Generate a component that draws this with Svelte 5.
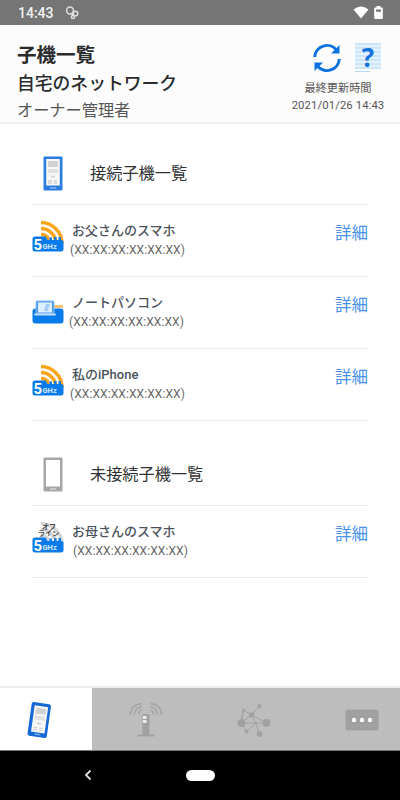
<script lang="ts">
  interface Device {
    name: string;
    mac: string;
    kind: "wifi" | "laptop" | "offline";
    shift: number;
  }

  const connected: Device[] = [
    { name: "お父さんのスマホ", mac: "(XX:XX:XX:XX:XX:XX)", kind: "wifi", shift: -2 },
    { name: "ノートパソコン", mac: "(XX:XX:XX:XX:XX:XX)", kind: "laptop", shift: -3 },
    { name: "私のiPhone", mac: "(XX:XX:XX:XX:XX:XX)", kind: "wifi", shift: -2 },
  ];

  const disconnected: Device[] = [
    { name: "お母さんのスマホ", mac: "(XX:XX:XX:XX:XX:XX)", kind: "offline", shift: 1 },
  ];
</script>

{#snippet phoneScreen()}
  <rect x="3.200" y="3" width="13.600" height="26.5" fill="#f7f7f5" />
  <rect x="5" y="5" width="10" height="6" fill="#d0d2d3" />
  <rect x="5" y="13" width="10" height="4" fill="#dfe0e1" />
  <path d="M8 20.500h4M5 25h4M11 25h3M5 27.200h4M11 27.200h3" stroke="#ccd0d3" stroke-width="1.300" />
{/snippet}

{#snippet arcs(color: string)}
  <g fill="none" stroke={color} stroke-width="3.500">
    <path d="M9 2.500A21 21 0 0 1 30 23.500" />
    <path d="M9 8.500A15 15 0 0 1 24 23.500" />
    <path d="M9 14.500A9 9 0 0 1 18 23.500" />
  </g>
{/snippet}

{#snippet deviceIcon(kind: string)}
  <svg class="device-icon" width="32" height="34" viewBox="0 0 32 34">
    {#if kind === "laptop"}
      <rect x="0.500" y="16.500" width="31" height="15" rx="3" fill="#087bea" />
      <path d="M22 14.500h9" stroke="#f3b95d" stroke-width="2.500" />
      <rect x="4" y="9" width="18" height="13" rx="1" fill="#4a9bea" stroke="#8cc0f2" stroke-width="1" />
      <rect x="6" y="10.500" width="14" height="10" fill="#dceeff" />
      <path d="M14 12h4l-2.500 7h-3.500z" fill="#a4cdf6" />
      <path d="M3 22.500h20" stroke="#c2def8" stroke-width="1.800" stroke-linecap="round" />
    {:else}
      {#if kind === "wifi"}
        {@render arcs("#f9a51a")}
      {:else}
        {@render arcs("#d2d3d4")}
        <text class="offline" x="10" y="8">オフ</text>
        <text class="offline" x="6" y="15">ライン</text>
      {/if}
      <path
        d="M3 16.500h10.500l2 3.500h2v-2.500h2.500v2.500h2v-3h2.500v3h2v-3H29v3h.500a2 2 0 0 1 2 2v7a2.500 2.500 0 0 1-2.500 2.500H3A2.500 2.500 0 0 1 .5 29V19A2.500 2.500 0 0 1 3 16.500z"
        fill="#087bea"
      />
      <text class="five" x="1.500" y="29.500">5</text>
      <text class="ghz" x="10.500" y="29">GHz</text>
    {/if}
  </svg>
{/snippet}

{#snippet deviceRow(device: Device)}
  <li class="device">
    {@render deviceIcon(device.kind)}
    <div class="info">
      <div class="name">{device.name}</div>
      <div class="mac" style="margin-left: {device.shift}px">{device.mac}</div>
    </div>
    <button class="detail">詳細</button>
  </li>
{/snippet}

<div class="screen">
  <div class="status">
    <span class="clock">14:43</span>
    <svg width="15" height="15" viewBox="0 0 15 15" fill="none" stroke="#e0e0e0" stroke-width="1.500">
      <circle cx="5" cy="4.500" r="3.400" />
      <circle cx="10.500" cy="7.500" r="2.300" />
      <circle cx="8" cy="11" r="1.600" />
      <path d="M7 7l1 3" />
    </svg>
    <div class="signals">
      <svg width="16" height="14" viewBox="0 0 16 14">
        <path d="M0.500 3.500Q8 -2.500 15.500 3.500L8 12.500z" fill="#fff" />
      </svg>
      <svg width="9" height="14" viewBox="0 0 9 14">
        <path d="M2.500 1.500V0h4v1.500H8a.8.8 0 0 1 .8.800v10a.8.8 0 0 1-.8.800H1a.8.8 0 0 1-.8-.8v-10A.8.8 0 0 1 1 1.500z" fill="#fff" />
        <rect x="2" y="3.500" width="5" height="2.300" fill="#757575" />
      </svg>
    </div>
  </div>

  <header>
    <div class="titles">
      <h1>子機一覧</h1>
      <h2>自宅のネットワーク</h2>
      <p>オーナー管理者</p>
    </div>
    <div class="update">
      <div class="actions">
        <svg width="30" height="30" viewBox="0 0 30 30">
          <g fill="none" stroke="#0b72df" stroke-width="3">
            <path d="M2.700 14A12.300 12.300 0 0 1 24.500 7" />
            <path d="M27.300 16A12.300 12.300 0 0 1 5.500 23" />
          </g>
          <path d="M27.500 2v8.500h-8.500zM2.500 28v-8.500h8.500z" fill="#0b72df" />
        </svg>
        <svg class="help" width="26" height="42" viewBox="0 -8 26 42">
          <rect width="26" height="26" fill="#e4f2fd" />
          <path d="M0 1h26M0 5h26M0 9h26M0 13h26M0 17h26M0 21h26M0 25h26M0 28.500h15" stroke="#b4d8f5" stroke-width="1" />
          <text class="question" x="13" y="24">?</text>
        </svg>
      </div>
      <div class="label">最終更新時間</div>
      <div class="date">2021/01/26 14:43</div>
    </div>
  </header>

  <main>
    <section>
      <h3>
        <svg width="20" height="35" viewBox="0 0 20 35">
          <rect x="0.500" y="0.500" width="19" height="34" rx="1" fill="#2b7de1" />
          {@render phoneScreen()}
          <path d="M7 32h6" stroke="#86b5ef" stroke-width="1.500" />
        </svg>
        <span>接続子機一覧</span>
      </h3>
      <ul>
        {#each connected as device}
          {@render deviceRow(device)}
        {/each}
      </ul>
    </section>

    <section class="second">
      <h3>
        <svg width="20" height="35" viewBox="0 0 20 35">
          <rect x="0.500" y="0.500" width="19" height="34" rx="1" fill="#a5a8a7" />
          <rect x="3" y="3" width="14" height="26.500" fill="#fff" />
          <path d="M7 32h6" stroke="#d5d6d6" stroke-width="1.500" />
        </svg>
        <span>未接続子機一覧</span>
      </h3>
      <ul>
        {#each disconnected as device}
          {@render deviceRow(device)}
        {/each}
      </ul>
    </section>
  </main>

  <nav>
    <div class="tab active">
      <svg width="28" height="38" viewBox="0 0 28 38">
        <g transform="rotate(8 14 19) translate(4.500 2)">
          <rect x="0" y="0" width="19.500" height="34" rx="2" fill="#1769d5" />
          {@render phoneScreen()}
          <path d="M7 31.500h6" stroke="#73a8ea" stroke-width="1.500" />
        </g>
      </svg>
    </div>
    <div class="tab">
      <svg width="34" height="36" viewBox="0 0 34 36">
        <rect x="13.500" y="12" width="7" height="21" fill="#a0a2a2" />
        <path d="M8.500 33.500h17" stroke="#a0a2a2" stroke-width="2" />
        <rect x="14" y="14" width="3.500" height="3" fill="#eee" />
        <rect x="14" y="18" width="3.500" height="3" fill="#eee" />
        <g fill="none" stroke="#a3a5a5" stroke-width="1.600">
          <path d="M9.500 12Q10 9 12.500 8M5.500 12.500Q6 6 12.500 4.500M1.500 13Q1.500 3 12.500 1.500" />
          <path d="M24.500 12Q24 9 21.500 8M28.500 12.500Q28 6 21.500 4.500M32.500 13Q32.500 3 21.500 1.500" />
        </g>
      </svg>
    </div>
    <div class="tab">
      <svg width="34" height="34" viewBox="0 0 34 34" fill="#a0a2a2">
        <path d="M4 20L14.500 12L22.500 2.500M14.500 12L29.500 20H4L6.500 7L14.500 12L18.500 20L22.500 31M6.500 7L4 20L9.500 28.500L18.500 20" fill="none" stroke="#a0a2a2" stroke-width="1" />
        <circle cx="4.500" cy="20" r="4" />
        <circle cx="29.500" cy="20" r="4" />
        <circle cx="14.500" cy="12" r="2.700" />
        <circle cx="22.500" cy="3" r="2" />
        <circle cx="22.500" cy="31" r="2.900" />
        <circle cx="9.500" cy="28.500" r="1.900" />
        <circle cx="6.500" cy="7" r="1.500" />
        <circle cx="18.500" cy="20" r="1.300" />
      </svg>
    </div>
    <div class="tab">
      <svg width="34" height="22" viewBox="0 0 34 22">
        <rect x="0.500" y="0.500" width="33" height="21" rx="2.500" fill="#9fa1a1" />
        <g fill="#fff">
          <circle cx="9" cy="11" r="2.200" />
          <circle cx="17" cy="11" r="2.200" />
          <circle cx="25" cy="11" r="2.200" />
        </g>
      </svg>
    </div>
  </nav>

  <div class="system">
    <svg width="8" height="12" viewBox="0 0 8 12">
      <path d="M6.500 1.500L2 6l4.500 4.500" fill="none" stroke="#ddd" stroke-width="1.800" />
    </svg>
    <span class="home"></span>
  </div>
</div>

<style>
  :global(body) {
    margin: 0;
  }

  .screen {
    display: flex;
    flex-direction: column;
    width: 400px;
    height: 800px;
    overflow: hidden;
    background: #fff;
    color: #303234;
    font-family: Roboto, "Noto Sans CJK JP", sans-serif;
  }

  svg {
    display: block;
    flex: none;
  }

  .status {
    display: flex;
    align-items: center;
    box-sizing: border-box;
    height: 25px;
    padding: 1px 17px 0 18px;
    background: #757575;
  }

  .clock {
    width: 47px;
    color: #f2f2f2;
    font-size: 14px;
    font-weight: 500;
    line-height: 24px;
  }

  .signals {
    display: flex;
    gap: 5px;
    margin-left: auto;
  }

  header {
    display: flex;
    justify-content: space-between;
    box-sizing: border-box;
    height: 99px;
    padding: 0 15px 0 17px;
    border-bottom: 2px solid #efefef;
    background: #fcfcfc;
  }

  h1,
  h2,
  h3,
  p,
  ul {
    margin: 0;
    padding: 0;
  }

  .titles {
    padding-top: 15px;
    font-family: "Noto Sans CJK JP", sans-serif;
    white-space: nowrap;
  }

  h1 {
    color: #292b2d;
    font-size: 19.5px;
    font-weight: 700;
    line-height: 28px;
  }

  h2 {
    color: #292b2d;
    font-size: 17.8px;
    font-weight: 500;
    line-height: 29px;
  }

  p {
    color: #555;
    font-size: 16.2px;
    line-height: 24px;
  }

  .update {
    display: flex;
    flex-direction: column;
    align-items: center;
    width: 94px;
    white-space: nowrap;
  }

  .actions {
    display: flex;
    gap: 13px;
    align-self: flex-end;
    height: 30px;
    padding: 18px 4px 0 0;
  }

  .help {
    margin-top: -8px;
  }

  .question {
    fill: #1272dc;
    font-family: "Open Sans", sans-serif;
    font-size: 26px;
    font-weight: 700;
    text-anchor: middle;
  }

  .label {
    color: #555;
    font-size: 11.2px;
    line-height: 17px;
    margin-top: 7px;
  }

  .date {
    color: #555;
    font-size: 11.3px;
    line-height: 17px;
    letter-spacing: 0.1px;
  }

  main {
    flex: 1;
    padding: 0 32px;
  }

  h3 {
    display: flex;
    align-items: center;
    gap: 27px;
    box-sizing: border-box;
    height: 81px;
    padding: 19px 0 0 11px;
    border-bottom: 1px solid #e8eaeb;
    font-family: "Noto Sans CJK JP", sans-serif;
    font-size: 16.2px;
    font-weight: 400;
  }

  h3 span {
    padding-bottom: 3px;
  }

  .second h3 {
    height: 85px;
    padding-top: 23px;
  }

  ul {
    list-style: none;
  }

  .device {
    display: flex;
    box-sizing: border-box;
    height: 72px;
    border-bottom: 1px solid #e8eaeb;
  }

  .device-icon {
    margin-top: 15px;
  }

  .info {
    flex: 1;
    padding: 16px 0 0 8px;
  }

  .name {
    color: #4a535c;
    font-size: 13px;
    font-weight: 500;
    line-height: 19px;
  }

  .mac {
    color: #666;
    font-size: 12px;
    line-height: 20px;
    letter-spacing: 0.1px;
  }

  .detail {
    align-self: flex-start;
    margin: 16px 0 0;
    padding: 0;
    border: 0;
    background: none;
    color: #4a90ed;
    font-family: "Noto Sans CJK JP", sans-serif;
    font-size: 16.5px;
    line-height: 23px;
  }

  .five {
    fill: #fff;
    font-size: 15px;
    font-weight: 700;
  }

  .ghz {
    fill: #d4e8fc;
    font-size: 7.5px;
    font-weight: 700;
  }

  .offline {
    fill: #444;
    font-size: 7px;
    font-weight: 700;
  }

  nav {
    display: grid;
    grid-template-columns: 92px 108px 108px 92px;
    box-sizing: border-box;
    height: 65px;
    border-top: 2px solid #ececec;
    border-bottom: 1px solid #777;
    background: #bdbdbd;
  }

  .tab {
    display: flex;
    align-items: center;
    justify-content: center;
    padding-top: 2px;
  }

  .tab.active {
    padding-right: 14px;
    background: #fff;
  }

  .tab:last-child {
    padding-left: 16px;
  }

  .system {
    display: flex;
    align-items: center;
    gap: 94px;
    box-sizing: border-box;
    height: 49px;
    padding: 0 0 1px 84px;
    background: #000;
  }

  .home {
    width: 29px;
    height: 11px;
    border-radius: 6px;
    background: #fff;
  }
</style>
